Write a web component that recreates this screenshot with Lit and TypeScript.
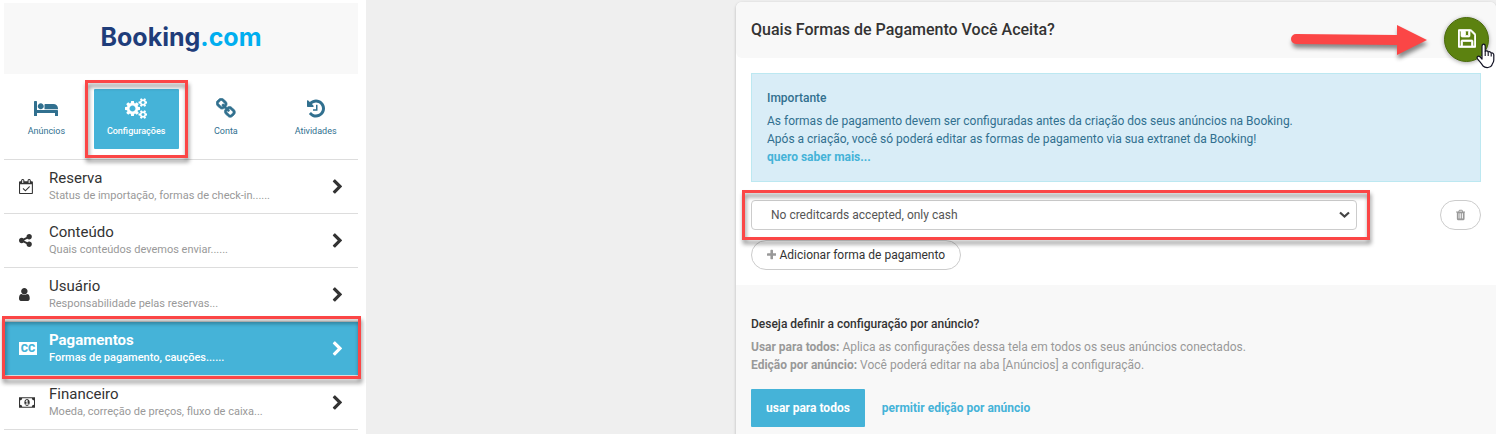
import { LitElement, html, css, svg } from "lit";
import { customElement, property } from "lit/decorators.js";
import { classMap } from "lit/directives/class-map.js";

type Glyph = { box: string; d: string };

const glyphs: Record<string, Glyph> = {
  bed: {
    box: "0 0 2048 1792",
    d: "M256 1024h1728q26 0 45 19t19 45v448h-256v-256h-1536v256h-256v-1216q0-26 19-45t45-19h128q26 0 45 19t19 45v704zm576-320q0-106-75-181t-181-75-181 75-75 181 75 181 181 75 181-75 75-181zm1216 256v-64q0-159-112.5-271.5t-271.5-112.5h-704q-26 0-45 19t-19 45v384h1152z",
  },
  cogs: {
    box: "0 0 1920 1792",
    d: "M896 896q0-106-75-181t-181-75-181 75-75 181 75 181 181 75 181-75 75-181zm768 512q0-52-38-90t-90-38-90 38-38 90q0 53 37.5 90.5t90.5 37.5 90.5-37.5 37.5-90.5zm0-1024q0-52-38-90t-90-38-90 38-38 90q0 53 37.5 90.5t90.5 37.5 90.5-37.5 37.5-90.5zm-384 421v185q0 10-7 19.5t-16 10.5l-155 24q-11 35-32 76 34 48 90 115 7 11 7 20 0 12-7 19-23 30-82.5 89.5t-78.5 59.5q-11 0-21-7l-115-90q-37 19-77 31-11 108-23 155-7 24-30 24h-186q-11 0-20-7.5t-10-17.5l-23-153q-34-10-75-31l-118 89q-7 7-20 7-11 0-21-8-144-133-144-160 0-9 7-19 10-14 41-53t47-61q-23-44-35-82l-152-24q-10-1-17-9.5t-7-19.5v-185q0-10 7-19.5t16-10.5l155-24q11-35 32-76-34-48-90-115-7-11-7-20 0-12 7-20 22-30 82-89t79-59q11 0 21 7l115 90q34-18 77-32 11-108 23-154 7-24 30-24h186q11 0 20 7.5t10 17.5l23 153q34 10 75 31l118-89q8-7 20-7 11 0 21 8 144 133 144 160 0 8-7 19-12 16-42 54t-45 60q23 48 34 82l152 23q10 2 17 10.5t7 19.5zm640 533v140q0 16-149 31-12 27-30 52 51 113 51 138 0 4-4 7-122 71-124 71-8 0-46-47t-52-68q-20 2-30 2t-30-2q-14 21-52 68t-46 47q-2 0-124-71-4-3-4-7 0-25 51-138-18-25-30-52-149-15-149-31v-140q0-16 149-31 13-29 30-52-51-113-51-138 0-4 4-7 4-2 35-20t59-34 30-16q8 0 46 46.5t52 67.5q20-2 30-2t30 2q51-71 92-112l6-2q4 0 124 70 4 3 4 7 0 25-51 138 17 23 30 52 149 15 149 31zm0-1024v140q0 16-149 31-12 27-30 52 51 113 51 138 0 4-4 7-122 71-124 71-8 0-46-47t-52-68q-20 2-30 2t-30-2q-14 21-52 68t-46 47q-2 0-124-71-4-3-4-7 0-25 51-138-18-25-30-52-149-15-149-31v-140q0-16 149-31 13-29 30-52-51-113-51-138 0-4 4-7 4-2 35-20t59-34 30-16q8 0 46 46.5t52 67.5q20-2 30-2t30 2q51-71 92-112l6-2q4 0 124 70 4 3 4 7 0 25-51 138 17 23 30 52 149 15 149 31z",
  },
  chain: {
    box: "64 0 1664 1792",
    d: "M1520 1216q0-40-28-68l-208-208q-28-28-68-28-42 0-72 32 3 3 19 18.5t21.5 21.5 15 19 13 25.5 3.5 27.5q0 40-28 68t-68 28q-15 0-27.5-3.5t-25.5-13-19-15-21.5-21.5-18.5-19q-33 31-33 73 0 40 28 68l206 207q27 27 68 27 40 0 68-26l147-146q28-28 28-67zm-703-705q0-40-28-68l-206-207q-28-28-68-28-39 0-68 27l-147 146q-28 28-28 67 0 40 28 68l208 208q27 27 68 27 42 0 72-31-3-3-19-18.5t-21.5-21.5-15-19-13-25.5-3.5-27.5q0-40 28-68t68-28q15 0 27.5 3.5t25.5 13 19 15 21.5 21.5 18.5 19q33-31 33-73zm895 705q0 120-85 203l-147 146q-83 83-203 83-121 0-204-85l-206-207q-83-83-83-203 0-123 88-209l-88-88q-86 88-208 88-120 0-204-84l-208-208q-84-84-84-204t85-203l147-146q83-83 203-83 121 0 204 85l206 207q83 83 83 203 0 123-88 209l88 88q86-88 208-88 120 0 204 84l208 208q84 84 84 204z",
  },
  history: {
    box: "128 0 1536 1792",
    d: "M1664 896q0 156-61 298t-164 245-245 164-298 61q-172 0-327-72.5t-264-204.5q-7-10-6.5-22.5t8.5-20.5l137-138q10-9 25-9 16 2 23 12 73 95 179 147t225 52q104 0 198.5-40.5t163.5-109.5 109.5-163.5 40.5-198.5-40.5-198.5-109.5-163.5-163.5-109.5-198.5-40.5q-98 0-188 35.5t-160 101.5l137 138q31 30 14 69-17 40-59 40h-448q-26 0-45-19t-19-45v-448q0-42 40-59 39-17 69 14l130 129q107-101 244.5-156.5t284.5-55.5q156 0 298 61t245 164 164 245 61 298zm-640-288v448q0 14-9 23t-23 9h-320q-14 0-23-9t-9-23v-64q0-14 9-23t23-9h224v-352q0-14 9-23t23-9h64q14 0 23 9t9 23z",
  },
  calendar: {
    box: "0 0 1664 1792",
    d: "M1303 964l-512 512q-10 9-23 9t-23-9l-288-288q-9-10-9-23t9-22l46-46q9-9 22-9t23 9l220 220 444-444q10-9 23-9t22 9l46 46q9 9 9 22t-9 23zm-1175 700h1408v-1024h-1408v1024zm384-1216v-288q0-14-9-23t-23-9h-64q-14 0-23 9t-9 23v288q0 14 9 23t23 9h64q14 0 23-9t9-23zm768 0v-288q0-14-9-23t-23-9h-64q-14 0-23 9t-9 23v288q0 14 9 23t23 9h64q14 0 23-9t9-23zm384-64v1280q0 52-38 90t-90 38h-1408q-52 0-90-38t-38-90v-1280q0-52 38-90t90-38h128v-96q0-66 47-113t113-47h64q66 0 113 47t47 113v96h384v-96q0-66 47-113t113-47h64q66 0 113 47t47 113v96h128q52 0 90 38t38 90z",
  },
  share: {
    box: "128 0 1536 1792",
    d: "M1344 1024q133 0 226.5 93.5t93.5 226.5-93.5 226.5-226.5 93.5-226.5-93.5-93.5-226.5q0-12 2-34l-360-180q-92 86-218 86-133 0-226.5-93.5t-93.5-226.5 93.5-226.5 226.5-93.5q126 0 218 86l360-180q-2-22-2-34 0-133 93.5-226.5t226.5-93.5 226.5 93.5 93.5 226.5-93.5 226.5-226.5 93.5q-126 0-218-86l-360 180q2 22 2 34t-2 34l360 180q92-86 218-86z",
  },
  user: {
    box: "256 0 1280 1792",
    d: "M1536 1399q0 109-62.5 187t-150.5 78h-854q-88 0-150.5-78t-62.5-187q0-85 8.5-160.5t31.5-152 58.5-131 94-89 134.5-34.5q131 128 313 128t313-128q76 0 134.5 34.5t94 89 58.5 131 31.5 152 8.5 160.5zm-256-887q0 159-112.5 271.5t-271.5 112.5-271.5-112.5-112.5-271.5 112.5-271.5 271.5-112.5 271.5 112.5 112.5 271.5z",
  },
  money: {
    box: "0 0 1920 1792",
    d: "M0 256h1920v1280h-1920zM384 1408h1152q0-106 75-181t181-75v-512q-106 0-181-75t-75-181h-1152q0 106-75 181t-181 75v512q106 0 181 75t75 181zM960 480q320 60 320 416t-320 416q-320-60-320-416t320-416zM768 1152h384v-96h-128v-448h-114l-148 137 77 80q42-37 55-57h2v288h-128z",
  },
  chevron: {
    box: "256 0 1216 1792",
    d: "M1363 877l-742 742q-19 19-45 19t-45-19l-166-166q-19-19-19-45t19-45l531-531-531-531q-19-19-19-45t19-45l166-166q19-19 45-19t45 19l742 742q19 19 19 45t-19 45z",
  },
  save: {
    box: "128 0 1536 1792",
    d: "M512 1536h768v-384h-768v384zm896 0h128v-896q0-14-10-38.5t-20-34.5l-281-281q-10-10-34-20t-39-10v416q0 40-28 68t-68 28h-576q-40 0-68-28t-28-68v-416h-128v1280h128v-416q0-40 28-68t68-28h832q40 0 68 28t28 68v416zm-384-928v-320q0-13-9.5-22.5t-22.5-9.5h-192q-13 0-22.5 9.5t-9.5 22.5v320q0 13 9.5 22.5t22.5 9.5h192q13 0 22.5-9.5t9.5-22.5zm640 32v928q0 40-28 68t-68 28h-1344q-40 0-68-28t-28-68v-1344q0-40 28-68t68-28h928q40 0 88 20t76 48l280 280q28 28 48 76t20 88z",
  },
  trash: {
    box: "192 0 1408 1792",
    d: "M704 1376v-704q0-14-9-23t-23-9h-64q-14 0-23 9t-9 23v704q0 14 9 23t23 9h64q14 0 23-9t9-23zm256 0v-704q0-14-9-23t-23-9h-64q-14 0-23 9t-9 23v704q0 14 9 23t23 9h64q14 0 23-9t9-23zm256 0v-704q0-14-9-23t-23-9h-64q-14 0-23 9t-9 23v704q0 14 9 23t23 9h64q14 0 23-9t9-23zm-544-992h448l-48-117q-7-9-17-11h-317q-10 2-17 11zm928 32v64q0 14-9 23t-23 9h-96v948q0 83-47 143.5t-113 60.5h-832q-66 0-113-58.5t-47-141.5v-952h-96q-14 0-23-9t-9-23v-64q0-14 9-23t23-9h309l70-167q15-37 54-63t79-26h320q40 0 79 26t54 63l70 167h309q14 0 23 9t9 23z",
  },
  plus: {
    box: "192 0 1408 1792",
    d: "M1600 736v192q0 40-28 68t-68 28h-416v416q0 40-28 68t-68 28h-192q-40 0-68-28t-28-68v-416h-416q-40 0-68-28t-28-68v-192q0-40 28-68t68-28h416v-416q0-40 28-68t68-28h192q40 0 68 28t28 68v416h416q40 0 68 28t28 68z",
  },
};

@customElement("ui-icon")
export class UiIcon extends LitElement {
  static styles = css`
    :host {
      display: inline-flex;
      height: 14px;
    }
    .glyph {
      display: block;
      height: 100%;
      width: auto;
      fill: currentColor;
    }
    .bold {
      stroke: currentColor;
      stroke-width: 60;
    }
  `;

  @property() name = "plus";

  render() {
    const glyph = glyphs[this.name];
    const bold = this.name === "save" || this.name === "chain";
    return html`<svg
      class=${classMap({ glyph: true, bold })}
      viewBox=${glyph.box}
      fill-rule="evenodd"
      aria-hidden="true"
    >
      ${svg`<path d=${glyph.d}></path>`}
    </svg>`;
  }
}

const tabs = [
  { icon: "bed", label: "Anúncios", active: false },
  { icon: "cogs", label: "Configurações", active: true },
  { icon: "chain", label: "Conta", active: false },
  { icon: "history", label: "Atividades", active: false },
];

const sections = [
  { icon: "calendar", title: "Reserva", hint: "Status de importação, formas de check-in......" },
  { icon: "share", title: "Conteúdo", hint: "Quais conteúdos devemos enviar......" },
  { icon: "user", title: "Usuário", hint: "Responsabilidade pelas reservas..." },
  { icon: "cc", title: "Pagamentos", hint: "Formas de pagamento, cauções......", active: true },
  { icon: "money", title: "Financeiro", hint: "Moeda, correção de preços, fluxo de caixa..." },
];

@customElement("settings-sidebar")
export class SettingsSidebar extends LitElement {
  static styles = css`
    :host {
      display: block;
      background: #fff;
      padding: 3px 8px 0 4px;
    }
    a {
      color: inherit;
      text-decoration: none;
    }
    .brand {
      display: flex;
      justify-content: center;
      box-sizing: border-box;
      height: 71px;
      padding-top: 16px;
      background: #f8f8f8;
      font-family: Inter, sans-serif;
      font-weight: 700;
      font-size: 25px;
      line-height: 36px;
      color: #1f3d7a;
    }
    .brand .tld {
      color: #00aeef;
    }
    .tabs {
      display: grid;
      grid-template-columns: repeat(4, 1fr);
      gap: 5px;
      padding: 15px 0 10px;
    }
    .tab {
      position: relative;
      display: flex;
      flex-direction: column;
      align-items: center;
      gap: 5px;
      height: 60px;
      box-sizing: border-box;
      padding-top: 9px;
      border-radius: 1px;
      font-size: 9px;
      line-height: 14px;
      color: #31708f;
    }
    .tab ui-icon {
      height: 21px;
    }
    .tab.active {
      background: #45b3d8;
      color: #fff;
      font-weight: 500;
    }
    .list {
      margin: 0;
      padding: 0;
      list-style: none;
      border-top: 1px solid #ddd;
    }
    .row {
      position: relative;
      display: grid;
      grid-template-columns: 30px 1fr auto;
      align-items: center;
      height: 53px;
      padding: 0 15px;
      border-bottom: 1px solid #ddd;
      color: #333;
    }
    .row ui-icon {
      height: 15px;
    }
    .row .go {
      height: 16px;
    }
    .title {
      display: block;
      font-size: 15px;
      line-height: 18px;
    }
    .hint {
      display: block;
      font-size: 11px;
      line-height: 17px;
      color: #999;
    }
    .row.active {
      background: #45b3d8;
      color: #fff;
    }
    .row.active .title {
      font-weight: 700;
    }
    .row.active .hint {
      color: #fff;
      font-weight: 500;
    }
    .cc {
      justify-self: start;
      box-sizing: border-box;
      width: 18px;
      height: 13px;
      background: #fff;
      color: #45b3d8;
      font-size: 11px;
      font-weight: 900;
      line-height: 13px;
      text-align: center;
    }
    .mark {
      position: absolute;
      border: 3px solid #fb4646;
      filter: drop-shadow(1px 4px 2px rgba(0, 0, 0, 0.45));
      pointer-events: none;
      z-index: 1;
    }
    .tab .mark {
      inset: -9px;
    }
    .row .mark {
      inset: -6px -3px -4px -2px;
    }
  `;

  render() {
    return html`
      <div class="brand"><span>Booking<span class="tld">.com</span></span></div>
      <nav class="tabs">
        ${tabs.map(
          (t) => html`<a href="#" class=${classMap({ tab: true, active: t.active })}>
            <ui-icon name=${t.icon}></ui-icon><span>${t.label}</span>
            ${t.active ? html`<span class="mark"></span>` : ""}
          </a>`
        )}
      </nav>
      <ul class="list">
        ${sections.map(
          (s) => html`<li>
            <a href="#" class=${classMap({ row: true, active: !!s.active })}>
              ${s.icon === "cc"
                ? html`<span class="cc">CC</span>`
                : html`<ui-icon name=${s.icon}></ui-icon>`}
              <span><span class="title">${s.title}</span><span class="hint">${s.hint}</span></span>
              <ui-icon class="go" name="chevron"></ui-icon>
              ${s.active ? html`<span class="mark"></span>` : ""}
            </a>
          </li>`
        )}
      </ul>
    `;
  }
}

@customElement("payment-panel")
export class PaymentPanel extends LitElement {
  static styles = css`
    :host {
      display: block;
      position: relative;
      margin-top: 2px;
      background: #fff;
      border-radius: 6px;
      box-shadow: 0 1px 3px rgba(0, 0, 0, 0.25);
      font-size: 12px;
      line-height: 18px;
    }
    button,
    select {
      font: inherit;
      margin: 0;
      cursor: pointer;
    }
    a {
      color: #45b3d8;
      font-weight: 700;
      text-decoration: none;
    }
    .head {
      display: flex;
      align-items: center;
      height: 56px;
      padding: 0 15px;
      background: #f8f8f8;
      border-radius: 6px;
    }
    h1 {
      margin: 0;
      font-size: 16px;
      line-height: 20px;
      font-weight: 500;
      color: #333;
    }
    .save {
      position: absolute;
      top: 15px;
      right: 7px;
      display: flex;
      align-items: center;
      justify-content: center;
      width: 45px;
      height: 45px;
      padding: 0 0 3px;
      border: 1px solid #4a6b0c;
      border-radius: 50%;
      background: #5c8210;
      color: #fff;
      box-shadow: 0 1px 4px rgba(0, 0, 0, 0.35);
    }
    .save ui-icon {
      height: 21px;
    }
    .arrow {
      position: absolute;
      top: 20px;
      right: 69px;
      overflow: visible;
      filter: drop-shadow(1px 4px 2px rgba(0, 0, 0, 0.45));
    }
    .pointer {
      position: absolute;
      top: 41px;
      right: 1px;
    }
    .body {
      padding: 15px;
    }
    .notice {
      padding: 15px;
      border: 1px solid #bce8f1;
      background: #d9edf7;
      color: #31708f;
    }
    .notice strong,
    .scope h2 {
      display: block;
      margin: 0 0 5px;
      font-size: 12px;
      line-height: 18px;
      font-weight: 500;
    }
    p {
      margin: 0;
    }
    .method {
      display: flex;
      justify-content: space-between;
      gap: 83px;
      margin: 18px 0 10px;
    }
    .field {
      position: relative;
      flex: 1;
      display: flex;
    }
    select {
      appearance: none;
      width: 100%;
      height: 30px;
      padding: 0 30px 0 19px;
      border: 1px solid #ccc;
      border-radius: 4px;
      background: #fff;
      color: #555;
    }
    .caret {
      position: absolute;
      right: 7px;
      top: 11px;
      pointer-events: none;
    }
    .mark {
      position: absolute;
      inset: -10px -13px -10px -9px;
      border: 3px solid #fb4646;
      filter: drop-shadow(1px 4px 2px rgba(0, 0, 0, 0.45));
      pointer-events: none;
      z-index: 1;
    }
    .pill {
      display: inline-flex;
      align-items: center;
      justify-content: center;
      gap: 3px;
      height: 30px;
      padding: 0 15px;
      border: 1px solid #ccc;
      border-radius: 15px;
      background: #fff;
      color: #333;
    }
    .pill ui-icon {
      height: 12px;
      color: #999;
    }
    .scope {
      padding: 30px 15px 15px;
      background: #f8f8f8;
      border-radius: 0 0 6px 6px;
      color: #999;
    }
    .scope h2 {
      color: #333;
    }
    .scope b {
      font-weight: 700;
    }
    .actions {
      display: flex;
      align-items: center;
      gap: 17px;
      margin-top: 15px;
    }
    .primary {
      height: 38px;
      padding: 0 15px;
      border: 0;
      border-radius: 1px;
      background: #45b3d8;
      color: #fff;
      font-weight: 700;
    }
  `;

  render() {
    return html`
      <header class="head"><h1>Quais Formas de Pagamento Você Aceita?</h1></header>
      <div class="body">
        <div class="notice">
          <strong>Importante</strong>
          <p>
            As formas de pagamento devem ser configuradas antes da criação dos seus anúncios na Booking.<br />
            Após a criação, você só poderá editar as formas de pagamento via sua extranet da Booking!<br />
            <a href="#">quero saber mais...</a>
          </p>
        </div>
        <div class="method">
          <div class="field">
            <select aria-label="Forma de pagamento">
              <option>No creditcards accepted, only cash</option>
            </select>
            <svg class="caret" width="11" height="8" viewBox="0 0 11 8" aria-hidden="true">
              <path d="M1 1.5 5.5 5.5 10 1.5" fill="none" stroke="#444" stroke-width="2.2" />
            </svg>
            <span class="mark"></span>
          </div>
          <button class="pill" type="button" aria-label="Excluir"><ui-icon name="trash"></ui-icon></button>
        </div>
        <button class="pill" type="button">
          <ui-icon name="plus"></ui-icon><span>Adicionar forma de pagamento</span>
        </button>
      </div>
      <section class="scope">
        <h2>Deseja definir a configuração por anúncio?</h2>
        <p><b>Usar para todos:</b> Aplica as configurações dessa tela em todos os seus anúncios conectados.</p>
        <p><b>Edição por anúncio:</b> Você poderá editar na aba [Anúncios] a configuração.</p>
        <div class="actions">
          <button class="primary" type="button">usar para todos</button>
          <a href="#">permitir edição por anúncio</a>
        </div>
      </section>
      <svg class="arrow" width="144" height="36" viewBox="0 0 144 36" aria-hidden="true">
        <path
          d="M13 12 L114 13 V3 L144 18 L114 33 V23 L13 22 A5 5 0 0 1 13 12Z"
          fill="#fb4646"
        />
      </svg>
      <button class="save" type="button" aria-label="Salvar"><ui-icon name="save"></ui-icon></button>
      <svg class="pointer" width="19" height="26" viewBox="0 0 19 26" aria-hidden="true">
        <path
          d="M6 16V3.2C6 .4 9.2.4 9.2 3.2V8.5C9.8 7.5 12 7.7 12.2 9.2C13 8.3 15 8.7 15.2 10.2C16.3 9.6 17.8 10.2 17.8 12V17C17.8 19.5 16.2 20.5 16 22C14.8 25 9.5 25.4 7 23C5.5 20.5 3.5 18.5 1.5 15.8C.3 13.8 2.3 12.6 3.8 13.7Z"
          fill="#fff"
          stroke="#112"
          stroke-width="1.2"
          stroke-linejoin="round"
        />
        <path d="M9.2 8.5V13M12.2 9.5V13M15.2 10.5V13.5" fill="none" stroke="#112" stroke-width="1.1" />
      </svg>
    `;
  }
}

@customElement("app-root")
export class AppRoot extends LitElement {
  static styles = css`
    :host {
      display: grid;
      grid-template-columns: 366fr 370fr 760fr;
      height: 100vh;
      overflow: hidden;
      background: #efefef;
      font-family: Roboto, sans-serif;
    }
    .content {
      grid-column: 3;
    }
  `;

  render() {
    return html`
      <settings-sidebar></settings-sidebar>
      <payment-panel class="content"></payment-panel>
    `;
  }
}
